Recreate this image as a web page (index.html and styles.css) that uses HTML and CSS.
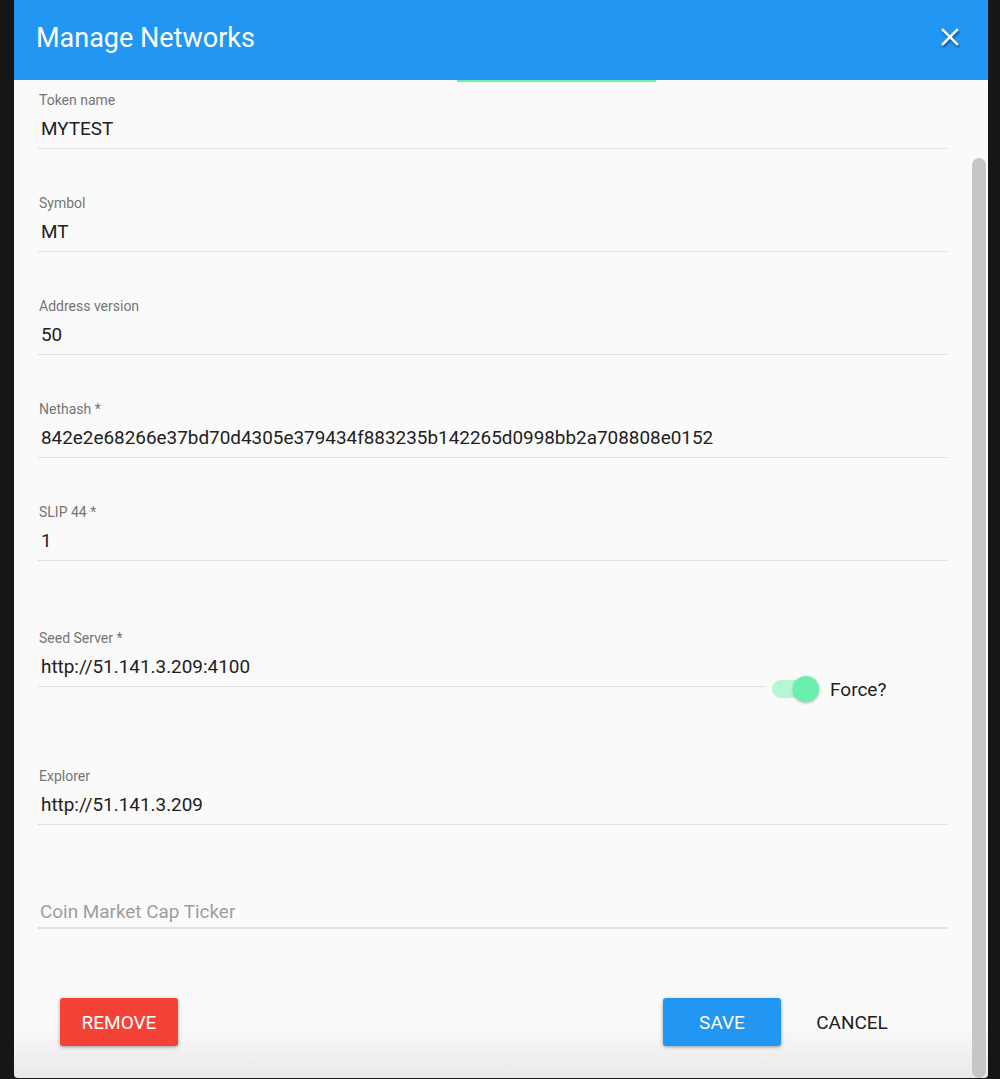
FILE: index.html
```html
<!DOCTYPE html>
<html>
<head>
<meta charset="utf-8">
<link rel="stylesheet" href="styles.css">
</head>
<body>
<div class="page">
  <div class="dialog">
    <div class="header">
      <div class="title">Manage Networks</div>
      <svg class="close" viewBox="0 0 24 24" width="30" height="30"><path d="M19 6.41L17.59 5 12 10.59 6.41 5 5 6.41 10.59 12 5 17.59 6.41 19 12 13.41 17.59 19 19 17.59 13.41 12z" fill="#fff"/></svg>
    </div>
    <div class="tab-ink"></div>
    <div class="body">
      <div class="content">
        <div class="field first"><div class="label">Token name</div><div class="value">MYTEST</div></div>
        <div class="field"><div class="label">Symbol</div><div class="value">MT</div></div>
        <div class="field"><div class="label">Address version</div><div class="value">50</div></div>
        <div class="field"><div class="label">Nethash *</div><div class="value">842e2e68266e37bd70d4305e379434f883235b142265d0998bb2a708808e0152</div></div>
        <div class="field"><div class="label">SLIP 44 *</div><div class="value">1</div></div>
        <div class="seed-row">
          <div class="field seed"><div class="label">Seed Server *</div><div class="value">http://51.141.3.209:4100</div></div>
          <div class="toggle">
            <div class="switch"><div class="track"></div><div class="thumb"></div></div>
            <div class="toggle-label">Force?</div>
          </div>
        </div>
        <div class="field explorer"><div class="label">Explorer</div><div class="value">http://51.141.3.209</div></div>
        <div class="field ticker"><div class="value placeholder">Coin Market Cap Ticker</div></div>
        <div class="actions">
          <button class="btn raised red">REMOVE</button>
          <div class="right">
            <button class="btn raised blue">SAVE</button>
            <button class="btn flat">CANCEL</button>
          </div>
        </div>
      </div>
      <div class="scroll"><div class="thumb-bar"></div></div>
    </div>
  </div>
</div>
</body>
</html>
```
FILE: styles.css
```css
html, body {
  margin: 0;
  padding: 0;
  background: #161616;
  height: 1079px;
  overflow: hidden;
  font-family: Roboto, "Noto Sans", sans-serif;
}
.page {
  padding: 0 12px 0 14px;
}
.dialog {
  position: relative;
  height: 1078px;
  display: flex;
  flex-direction: column;
  border-radius: 0 0 4px 4px;
  background: linear-gradient(to bottom, #fafafa 0, #fafafa 1025px, #e8e8e8 1078px);
  overflow: hidden;
}
.header {
  height: 80px;
  flex: none;
  background: #2196f3;
  display: flex;
  align-items: center;
  justify-content: space-between;
  padding: 0 23px 0 22px;
  box-sizing: border-box;
}
.title {
  color: #fff;
  font-size: 27px;
  line-height: 32px;
  margin-top: -5px;
}
.close {
  margin-top: -6px;
  filter: drop-shadow(1px 2px 1px rgba(0,0,0,0.45));
}
.tab-ink {
  position: absolute;
  left: 443px;
  top: 80px;
  width: 199px;
  height: 2px;
  background: #69f0ae;
}
.body {
  flex: 1;
  display: flex;
}
.content {
  flex: 1;
  padding: 12px 25px 0 24px;
}
.field {
  border-bottom: 1px solid #e0e0e0;
  padding-bottom: 7px;
  margin-top: 46px;
}
.field.first { margin-top: 0; }
.label {
  font-size: 14px;
  line-height: 16px;
  color: #757575;
  padding-left: 1px;
}
.value {
  margin-top: 9px;
  font-size: 18.9px;
  line-height: 24px;
  color: #212121;
  padding-left: 3px;
}
.seed-row {
  display: flex;
  align-items: flex-end;
  margin-top: 69px;
}
.field.seed {
  margin-top: 0;
  width: 727px;
}
.toggle {
  display: flex;
  align-items: center;
  margin-left: 7px;
  margin-bottom: -16px;
  height: 28px;
}
.switch {
  position: relative;
  width: 47px;
  height: 28px;
}
.track {
  position: absolute;
  left: 0;
  top: 5px;
  width: 42px;
  height: 18px;
  border-radius: 9px;
  background: #b4f6d6;
}
.thumb {
  position: absolute;
  left: 21px;
  top: 1px;
  width: 26px;
  height: 26px;
  border-radius: 50%;
  background: #69f0ae;
  box-shadow: 0 1px 3px rgba(0,0,0,0.3);
}
.toggle-label {
  margin-left: 11px;
  font-size: 19px;
  color: #212121;
}
.field.explorer { margin-top: 81px; }
.field.ticker {
  margin-top: 75px;
  padding-bottom: 3px;
  border-bottom-width: 2px;
}
.field.ticker .value { margin-top: 0; }
.value.placeholder {
  color: #9e9e9e;
  padding-left: 2px;
}
.actions {
  margin: 69px 36px 0 22px;
  display: flex;
  justify-content: space-between;
}
.right {
  display: flex;
  gap: 12px;
}
.btn {
  width: 118px;
  height: 48px;
  border: none;
  border-radius: 3px;
  font-family: Roboto, "Noto Sans", sans-serif;
  font-size: 19px;
  color: #fff;
  padding: 0;
  background: transparent;
}
.btn.raised {
  box-shadow: 0 1px 4px rgba(0,0,0,0.25), 0 1px 2px rgba(0,0,0,0.15);
}
.btn.red { background: #f44336; }
.btn.blue { background: #2196f3; }
.btn.flat { color: #212121; }
.scroll {
  width: 16px;
  padding: 78px 2px 0 0;
  box-sizing: border-box;
  display: flex;
}
.thumb-bar {
  flex: 1;
  background: #c6c6c6;
  border-radius: 7px;
}
```
